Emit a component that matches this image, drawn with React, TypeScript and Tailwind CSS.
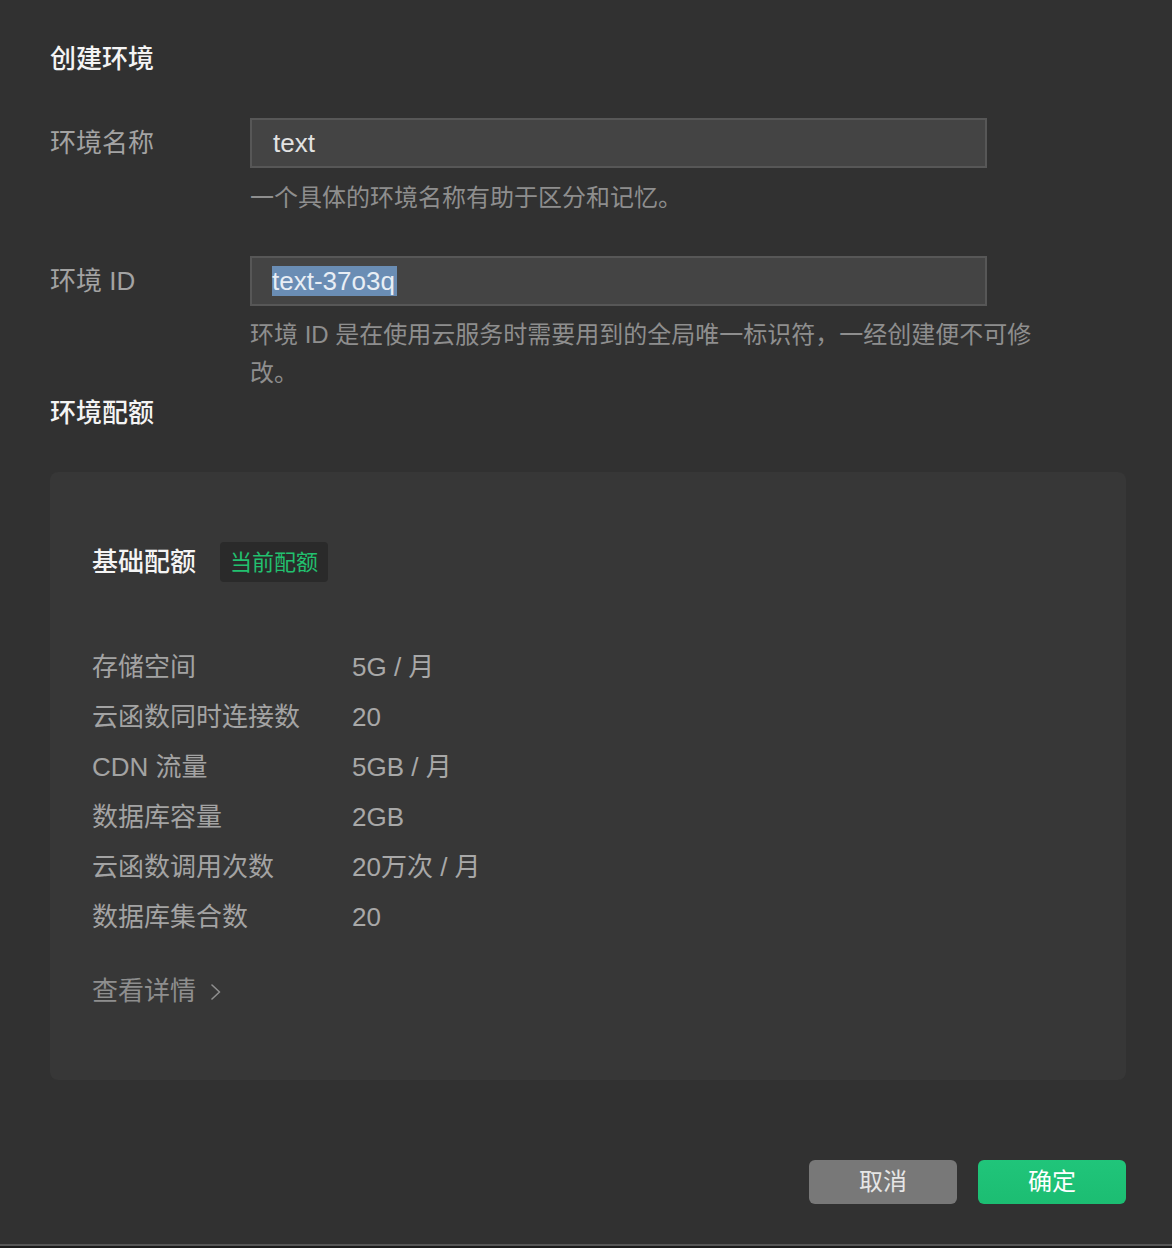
const quotas = [
  { label: "存储空间", value: "5G / 月" },
  { label: "云函数同时连接数", value: "20" },
  { label: "CDN 流量", value: "5GB / 月" },
  { label: "数据库容量", value: "2GB" },
  { label: "云函数调用次数", value: "20万次 / 月" },
  { label: "数据库集合数", value: "20" },
];

export default function App() {
  return (
    <div className="w-[1172px] h-[1248px] bg-[#313131] flex flex-col font-['Liberation_Sans','Noto_Sans_CJK_SC',sans-serif]">
      <div className="pl-[50px] pr-[46px]">
        {/* header */}
        <h1 className="pt-[41px] text-[26px] leading-[36px] font-medium text-[#f4f4f4]">创建环境</h1>

        {/* env name */}
        <div className="mt-[41px] flex">
          <div className="w-[200px] text-[26px] leading-[50px] text-[#a3a3a3]">环境名称</div>
          <div>
            <div className="w-[737px] h-[50px] border-2 border-[#575757] bg-[#444444] pl-[21px] flex items-center text-[26px] text-[#e2e2e2]">
              text
            </div>
            <p className="mt-[11px] text-[24px] leading-[38px] text-[#8e8e8e]">一个具体的环境名称有助于区分和记忆。</p>
          </div>
        </div>

        {/* env id */}
        <div className="mt-[39px] flex">
          <div className="w-[200px] text-[26px] leading-[50px] text-[#a3a3a3]">环境 ID</div>
          <div>
            <div className="w-[737px] h-[50px] border-2 border-[#575757] bg-[#444444] pl-[20px] flex items-center text-[26px] text-[#e8eef5]">
              <span className="bg-[#6a8db4] leading-[30px] pr-[2px]">text-37o3q</span>
            </div>
            <p className="mt-[10px] w-[800px] text-[24px] leading-[38px] text-[#8e8e8e]">
              环境 ID 是在使用云服务时需要用到的全局唯一标识符，一经创建便不可修改。
            </p>
          </div>
        </div>

        <h2 className="mt-[3px] text-[26px] leading-[36px] font-medium text-[#f4f4f4]">环境配额</h2>

        {/* quota card */}
        <div className="mt-[41px] w-[1076px] rounded-lg bg-[#373737] pl-[42px] pt-[70px] pb-[64px]">
          <div className="flex items-center">
            <span className="text-[26px] font-medium text-[#f4f4f4]">基础配额</span>
            <span className="ml-[24px] h-[40px] px-[10px] rounded bg-[#2a2a2a] flex items-center text-[22px] text-[#22c06f]">
              当前配额
            </span>
          </div>

          <div className="mt-[60px]">
            {quotas.map((q) => (
              <div key={q.label} className="flex text-[26px] leading-[50px]">
                <span className="w-[260px] text-[#a3a3a3]">{q.label}</span>
                <span className="text-[#a8a8a8]">{q.value}</span>
              </div>
            ))}
          </div>

          <div className="mt-[24px] flex items-center text-[26px] leading-[50px] text-[#8e8e8e]">
            <span>查看详情</span>
            <svg className="ml-[14px] mt-[2px]" width="12" height="16" viewBox="0 0 12 16" fill="none">
              <path d="M2 1 L9.5 8 L2 15" stroke="#8e8e8e" strokeWidth="1.6" strokeLinecap="round" strokeLinejoin="round" />
            </svg>
          </div>
        </div>

        {/* actions */}
        <div className="mt-[80px] flex justify-end gap-[21px]">
          <button className="w-[148px] h-[44px] rounded-md bg-[#787878] text-[24px] text-[#e6e6e6]">取消</button>
          <button className="w-[148px] h-[44px] rounded-md bg-gradient-to-b from-[#20c57a] to-[#1cbd72] text-[24px] text-white">确定</button>
        </div>
      </div>
      <div className="flex-1" />
      <div className="h-[2px] bg-[#575757]" />
      <div className="h-[2px] bg-[#1c1c1c]" />
    </div>
  );
}
